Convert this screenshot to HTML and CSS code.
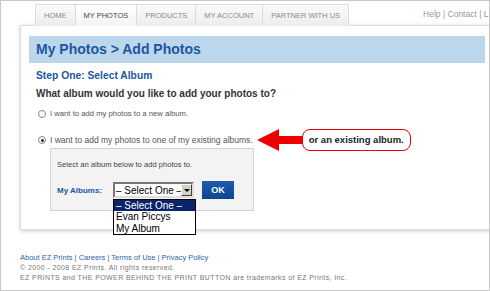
FILE: index.html
```html
<!DOCTYPE html>
<html lang="en">
<head>
    <meta charset="UTF-8">
    <title>My Photos &gt; Add Photos</title>
    <link rel="stylesheet" href="styles.css">
</head>
<body>
    <div class="frame">
        <div class="topbar">
            <ul class="tabs">
                <li class="tab">HOME</li>
                <li class="tab active">MY PHOTOS</li>
                <li class="tab">PRODUCTS</li>
                <li class="tab">MY ACCOUNT</li>
                <li class="tab">PARTNER WITH US</li>
            </ul>
            <div class="util-links">Help | Contact | L</div>
        </div>

        <div class="card">
            <h1 class="page-title">My Photos &gt; Add Photos</h1>
            <div class="content">
                <h2 class="step">Step One: Select Album</h2>
                <p class="question">What album would you like to add your photos to?</p>

                <div class="option option-new">
                    <span class="radio"></span>
                    <span>I want to add my photos to a new album.</span>
                </div>

                <div class="option option-existing">
                    <span class="radio checked"></span>
                    <span>I want to add my photos to one of my existing albums.</span>
                    <svg class="arrow" width="48" height="22" viewBox="0 0 48 22">
                        <polygon points="0,11 22,0 22,7 48,7 48,15 22,15 22,22" fill="#ee0000"/>
                    </svg>
                    <div class="callout">or an existing album.</div>
                </div>

                <div class="album-box">
                    <p class="album-hint">Select an album below to add photos to.</p>
                    <div class="album-row">
                        <label class="album-label">My Albums:</label>
                        <div class="select">
                            <span class="select-value">&ndash; Select One &ndash;</span>
                            <span class="select-btn"></span>
                            <ul class="select-list">
                                <li class="selected">&ndash; Select One &ndash;</li>
                                <li>Evan Piccys</li>
                                <li>My Album</li>
                            </ul>
                        </div>
                        <button class="ok-btn">OK</button>
                    </div>
                </div>
            </div>
        </div>

        <div class="footer">
            <div class="footer-links">About EZ Prints | Careers | Terms of Use | Privacy Policy</div>
            <div class="footer-copy">&copy; 2000 - 2008 EZ Prints. All rights reserved.</div>
            <div class="footer-copy">EZ PRINTS and THE POWER BEHIND THE PRINT BUTTON are trademarks of EZ Prints, Inc.</div>
        </div>
    </div>
</body>
</html>
```

FILE: styles.css
```css
/* Basic page frame */
body {
    margin: 0;
    font-family: "Liberation Sans", Arial, sans-serif;
    background-color: #fff;
}

.frame {
    width: 490px;
    height: 291px;
    border: 1px solid #c8c8c8;
    box-sizing: border-box;
    overflow: hidden;
}

/* Tabs */
.topbar {
    display: flex;
    align-items: flex-start;
    height: 24px;
    padding: 3px 0 0 34px;
    box-sizing: border-box;
    white-space: nowrap;
}

.tabs {
    display: flex;
    list-style: none;
    margin: 0;
    padding: 0;
}

.tab {
    height: 21px;
    line-height: 21px;
    padding: 0 8px;
    font-size: 7.5px;
    color: #8a8a8a;
    background: linear-gradient(#fbfbfb, #ececec);
    border: 1px solid #dcdcdc;
    border-bottom: none;
    margin-right: -1px;
}

.tab.active {
    color: #444;
    background: linear-gradient(#ffffff, #f4f4f4);
}

.util-links {
    margin-left: 75px;
    margin-top: 5px;
    font-size: 8.5px;
    color: #999;
}

/* Main card */
.card {
    margin-left: 19px;
    width: 474px;
    height: 205px;
    padding: 10px 8px 0;
    box-sizing: border-box;
    background-color: #fff;
    border: 1px solid #dedede;
    box-shadow: 0 1px 4px rgba(0, 0, 0, 0.22);
}

.page-title {
    margin: 0;
    height: 27px;
    line-height: 27px;
    padding-left: 7px;
    background-color: #bcd6ec;
    color: #1c56a2;
    font-size: 14px;
    font-weight: bold;
}

.content {
    padding-left: 7px;
}

.step {
    margin: 7px 0 0;
    font-size: 10.3px;
    color: #1c56a2;
}

.question {
    margin: 7px 0 0;
    font-size: 10px;
    font-weight: bold;
    color: #333;
}

.option {
    display: flex;
    align-items: center;
    color: #555;
    margin-left: 2px;
}

.option-new {
    margin-top: 10px;
    font-size: 7.7px;
}

.option-existing {
    margin-top: 11px;
    font-size: 8.5px;
}

.radio {
    width: 6px;
    height: 6px;
    border: 1px solid #888;
    border-radius: 50%;
    margin-right: 4px;
    position: relative;
    background-color: #fff;
}

.radio.checked::after {
    content: "";
    position: absolute;
    left: 1.5px;
    top: 1.5px;
    width: 3px;
    height: 3px;
    border-radius: 50%;
    background-color: #222;
}

.arrow {
    margin-left: 4px;
}

.callout {
    margin-left: -3px;
    height: 20px;
    line-height: 20px;
    padding: 0 6px;
    border: 1.5px solid #e00;
    border-radius: 8px;
    font-size: 9.5px;
    font-weight: bold;
    color: #222;
    background-color: #fff;
}

/* Album box */
.album-box {
    margin: -3px 0 0 14px;
    width: 204px;
    height: 63px;
    padding: 11px 6px 0;
    box-sizing: border-box;
    background-color: #f3f3f3;
    border: 1px solid #d2d2d2;
}

.album-hint {
    margin: 0;
    font-size: 7.6px;
    color: #444;
}

.album-row {
    display: flex;
    align-items: center;
    margin-top: 12px;
}

.album-label {
    width: 56px;
    font-size: 8px;
    font-weight: bold;
    color: #1c56a2;
}

.select {
    position: relative;
    display: flex;
    align-items: center;
    width: 81px;
    height: 16px;
    box-sizing: border-box;
    border: 2px solid;
    border-color: #777 #ddd #ddd #777;
    background-color: #fff;
    font-size: 10px;
    color: #000;
}

.select-value {
    flex: 1;
    padding-left: 1px;
    white-space: nowrap;
    overflow: hidden;
}

.select-btn {
    flex: none;
    width: 11px;
    height: 12px;
    box-sizing: border-box;
    background-color: #d4d0c8;
    border: 1px solid;
    border-color: #fff #404040 #404040 #fff;
    position: relative;
}

.select-btn::after {
    content: "";
    position: absolute;
    left: 2px;
    top: 4px;
    border-left: 3px solid transparent;
    border-right: 3px solid transparent;
    border-top: 3px solid #000;
}

.select-list {
    position: absolute;
    left: -2px;
    top: 15px;
    width: 83px;
    margin: 0;
    padding: 0;
    list-style: none;
    background-color: #fff;
    border: 1px solid #000;
    box-sizing: border-box;
}

.select-list li {
    height: 11.3px;
    line-height: 11.5px;
    padding-left: 2px;
    font-size: 10px;
}

.select-list li.selected {
    background-color: #0a246a;
    color: #fff;
}

.ok-btn {
    margin-left: 8px;
    width: 32px;
    height: 18px;
    padding: 0;
    border: none;
    background: linear-gradient(#1d5cad, #0d4690);
    color: #fff;
    font-family: "Liberation Sans", Arial, sans-serif;
    font-size: 9px;
    font-weight: bold;
}

/* Footer */
.footer {
    margin: 22px 0 0 19px;
}

.footer-links {
    font-size: 7.5px;
    color: #2b63ad;
    line-height: 11px;
}

.footer-copy {
    font-size: 7px;
    color: #777;
    letter-spacing: 0.4px;
    line-height: 10px;
}
```
